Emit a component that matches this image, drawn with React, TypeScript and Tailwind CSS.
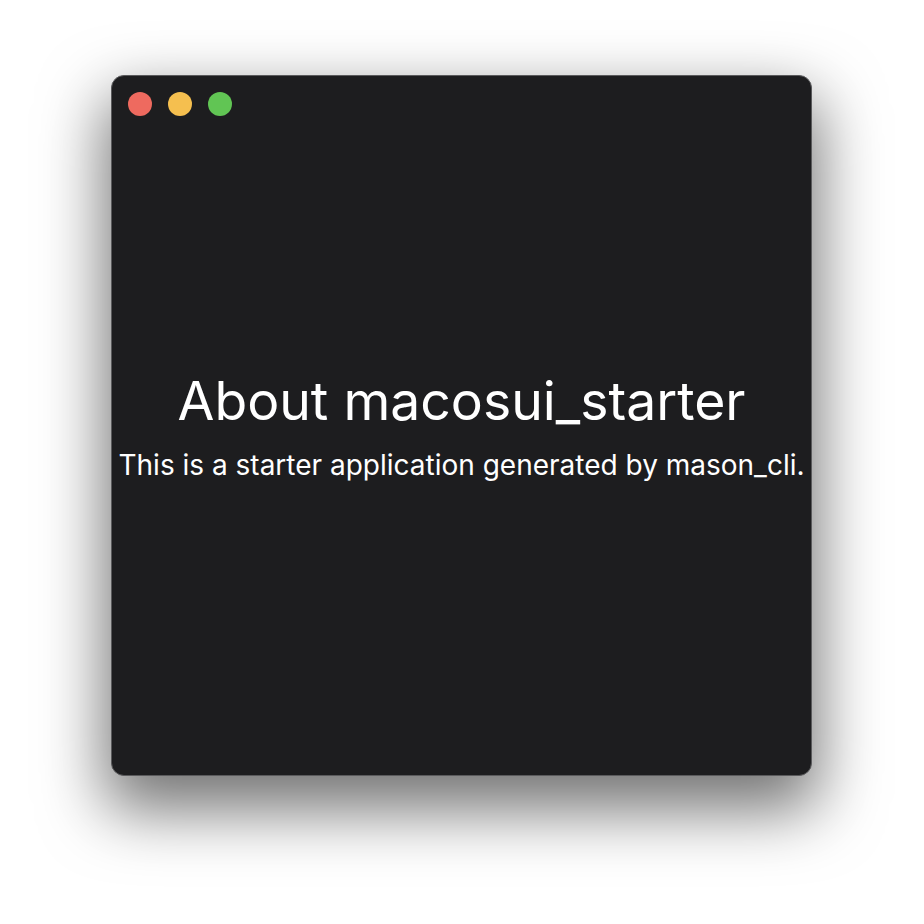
export default function App() {
  return (
    <div className="w-[924px] h-[924px] bg-white pt-[75px] pl-[111px]" style={{ fontFamily: 'Inter, "Noto Sans", sans-serif' }}>
      <div className="w-[701px] h-[701px] rounded-[13px] border border-[#5a5a5c] bg-[#1d1d1f] shadow-[0_28px_64px_6px_rgba(0,0,0,0.55)] flex flex-col">
        <div className="flex items-center gap-4 pl-[16px] pt-[16px]">
          <div className="w-6 h-6 rounded-full bg-[#ee6a5f]" />
          <div className="w-6 h-6 rounded-full bg-[#f5bf4f]" />
          <div className="w-6 h-6 rounded-full bg-[#61c554]" />
        </div>
        <div className="flex-1 flex flex-col items-center justify-center text-white pb-[41px]">
          <div className="text-[53.5px] leading-[64px] whitespace-nowrap">About macosui_starter</div>
          <div className="text-[28px] leading-[34px] mt-[15px] whitespace-nowrap">This is a starter application generated by mason_cli.</div>
        </div>
      </div>
    </div>
  );
}
